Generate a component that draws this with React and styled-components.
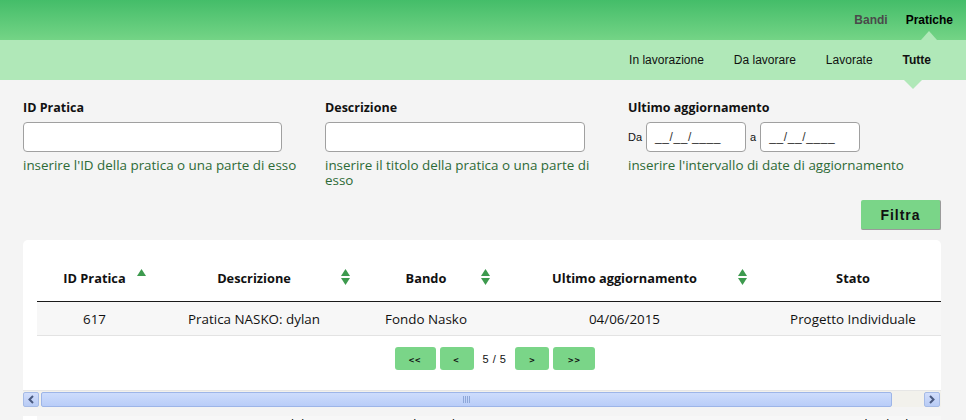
import React from "react";
import styled, { createGlobalStyle } from "styled-components";

const Global = createGlobalStyle`
  html, body { margin: 0; padding: 0; background: #f4f4f4; }
  body { font-family: "Open Sans", "Liberation Sans", sans-serif; color: #111; overflow: hidden; }
  * { box-sizing: border-box; }
`;

const Page = styled.div`
  width: 966px;
  height: 420px;
  overflow: hidden;
  background: #f4f4f4;
`;

const Header = styled.header`
  height: 40px;
  background: linear-gradient(#44bd69, #74d486);
  display: flex;
  justify-content: flex-end;
  align-items: center;
  padding-right: 13px;
  gap: 18px;
`;

const MainLink = styled.span`
  position: relative;
  font-family: "Liberation Sans", Arial, sans-serif;
  font-size: 12px;
  font-weight: bold;
  color: ${(p) => (p.$active ? "#000" : "#4a4a4a")};
  line-height: 40px;
  ${(p) =>
    p.$active &&
    `
    &::after {
      content: "";
      position: absolute;
      left: 50%;
      bottom: 0;
      margin-left: -8px;
      border-left: 8px solid transparent;
      border-right: 8px solid transparent;
      border-bottom: 9px solid #b0e8b8;
    }
  `}
`;

const SubNav = styled.nav`
  position: relative;
  height: 40px;
  background: #b0e8b8;
  display: flex;
  justify-content: flex-end;
  align-items: center;
  padding-right: 20px;
`;

const SubLink = styled.span`
  position: relative;
  padding: 0 15px;
  font-family: "Liberation Sans", Arial, sans-serif;
  font-size: 12px;
  font-weight: ${(p) => (p.$active ? "bold" : "normal")};
  color: #111;
  line-height: 34px;
  ${(p) =>
    p.$active &&
    `
    &::after {
      content: "";
      position: absolute;
      left: 50%;
      top: 37px;
      margin-left: -13px;
      border-left: 9px solid transparent;
      border-right: 9px solid transparent;
      border-top: 9px solid #b0e8b8;
    }
  `}
`;

const Main = styled.main`
  padding: 20px 25px 0 23px;
`;

const Filters = styled.div`
  display: grid;
  grid-template-columns: 302px 303px 1fr;
`;

const Field = styled.div`
  display: flex;
  flex-direction: column;
`;

const Label = styled.div`
  font-size: 12.5px;
  font-weight: bold;
  line-height: 16px;
  margin-bottom: 6px;
  color: #111;
`;

const TextInput = styled.div`
  width: ${(p) => p.$w}px;
  height: 30px;
  background: #fff;
  border: 1px solid #a0a0a0;
  border-radius: 4px;
  font-family: "Liberation Sans", Arial, sans-serif;
  font-size: 12px;
  letter-spacing: 0.6px;
  color: #333;
  display: flex;
  align-items: center;
  padding-left: 8px;
`;

const DateRow = styled.div`
  display: flex;
  align-items: center;
  gap: 4px;
  font-family: "Liberation Sans", Arial, sans-serif;
  font-size: 11px;
  color: #111;
`;

const Help = styled.div`
  margin-top: 6px;
  font-size: 13.4px;
  line-height: 15px;
  color: #2d6a36;
  width: ${(p) => p.$w || "auto"};
`;

const ButtonRow = styled.div`
  display: flex;
  justify-content: flex-end;
  margin-top: 12px;
`;

const FilterButton = styled.button`
  width: 80px;
  height: 30px;
  background: #7ad588;
  border: none;
  border-right: 1px solid #9a9a9a;
  border-bottom: 1px solid #9a9a9a;
  border-radius: 2px;
  font-family: "Liberation Sans", Arial, sans-serif;
  font-size: 14px;
  font-weight: bold;
  letter-spacing: 1px;
  color: #111;
  padding: 0;
`;

const Card = styled.section`
  margin-top: 10px;
  background: #fff;
  border-radius: 5px 5px 0 0;
  overflow: hidden;
`;

const Scroller = styled.div`
  padding: 14px 0 0 14px;
  width: 930px;
`;

const Table = styled.div`
  width: 916px;
`;

const cols = "115px 204px 140px 257px 200px";

const HeadRow = styled.div`
  display: grid;
  grid-template-columns: ${cols};
  height: 48px;
  border-bottom: 1px solid #1a1a1a;
`;

const HeadCell = styled.div`
  position: relative;
  display: flex;
  align-items: center;
  justify-content: center;
  font-size: 12.8px;
  font-weight: bold;
  color: #111;
`;

const SortIcon = styled.svg`
  position: absolute;
  right: 6px;
  top: 15px;
`;

const DataRow = styled.div`
  display: grid;
  grid-template-columns: ${cols};
  height: 34px;
  background: #f7f7f7;
  border-bottom: 1px solid #e3e3e3;
`;

const DataCell = styled.div`
  display: flex;
  align-items: center;
  justify-content: center;
  font-size: 13.4px;
  color: #111;
`;

const Pager = styled.div`
  display: flex;
  justify-content: center;
  align-items: center;
  gap: 4px;
  margin-top: 11px;
  padding-bottom: 20px;
`;

const PageBtn = styled.span`
  width: ${(p) => p.$w}px;
  height: 23px;
  background: #7ad588;
  border-radius: 3px;
  display: flex;
  align-items: center;
  justify-content: center;
  font-family: "DejaVu Sans Mono", monospace;
  font-size: 9px;
  font-weight: bold;
  letter-spacing: 1px;
  color: #111;
  padding-top: 3px;
`;

const PageInfo = styled.span`
  font-family: "Liberation Sans", Arial, sans-serif;
  font-size: 11px;
  color: #111;
  margin: 0 5px;
  letter-spacing: 0.5px;
`;

const ScrollBar = styled.div`
  display: flex;
  height: 17px;
  background: #f2f1ec;
  border-top: 1px solid #e6e6e6;
  padding: 1px 1px 0 0;
`;

const ScrollBtn = styled.span`
  width: 16px;
  height: 15px;
  background: linear-gradient(#d2defb, #b8cbf5);
  border: 1px solid #a6bbe6;
  border-radius: 2px;
  display: flex;
  align-items: center;
  justify-content: center;
  margin: ${(p) => (p.$right ? "0 0 0 auto" : "0")};
`;

const Thumb = styled.span`
  width: 851px;
  height: 15px;
  margin-left: 2px;
  background: linear-gradient(#cddcfc, #b9cdf8);
  border: 1px solid #9db5e8;
  border-radius: 2px;
  display: flex;
  align-items: center;
  justify-content: center;
`;

const Grip = styled.span`
  width: 7px;
  height: 7px;
  background: repeating-linear-gradient(90deg, #8ea7d8 0 1px, transparent 1px 2px);
`;

const GhostCard = styled.div`
  margin-top: 9px;
  background: #fff;
  padding-left: 14px;
`;

const GhostRow = styled(DataRow)`
  height: 20px;
  & > div { align-items: flex-start; margin-top: -1px; }
`;

const Chevron = ({ right }) => (
  <svg width="6" height="9" viewBox="0 0 6 9">
    <path
      d={right ? "M1 1 L4.5 4.5 L1 8" : "M5 1 L1.5 4.5 L5 8"}
      fill="none"
      stroke="#4a5a80"
      strokeWidth="2"
    />
  </svg>
);

const Sort = ({ up }) => (
  <SortIcon width="9" height="16" viewBox="0 0 9 16">
    <path d="M4.5 0 L9 7 L0 7 Z" fill="#3d9a4e" />
    {!up && <path d="M0 9 L9 9 L4.5 16 Z" fill="#3d9a4e" />}
  </SortIcon>
);

const headers = [
  { t: "ID Pratica", s: "up" },
  { t: "Descrizione", s: "both" },
  { t: "Bando", s: "both" },
  { t: "Ultimo aggiornamento", s: "both" },
  { t: "Stato" },
];

const row = ["617", "Pratica NASKO: dylan", "Fondo Nasko", "04/06/2015", "Progetto Individuale"];

export default function App() {
  return (
    <Page>
      <Global />
      <Header>
        <MainLink>Bandi</MainLink>
        <MainLink $active>Pratiche</MainLink>
      </Header>
      <SubNav>
        <SubLink>In lavorazione</SubLink>
        <SubLink>Da lavorare</SubLink>
        <SubLink>Lavorate</SubLink>
        <SubLink $active>Tutte</SubLink>
      </SubNav>
      <Main>
        <Filters>
          <Field>
            <Label>ID Pratica</Label>
            <TextInput $w={259} />
            <Help>inserire l'ID della pratica o una parte di esso</Help>
          </Field>
          <Field>
            <Label>Descrizione</Label>
            <TextInput $w={260} />
            <Help $w="285px">inserire il titolo della pratica o una parte di esso</Help>
          </Field>
          <Field>
            <Label>Ultimo aggiornamento</Label>
            <DateRow>
              <span>Da</span>
              <TextInput $w={100}>__/__/____</TextInput>
              <span>a</span>
              <TextInput $w={100}>__/__/____</TextInput>
            </DateRow>
            <Help>inserire l'intervallo di date di aggiornamento</Help>
          </Field>
        </Filters>
        <ButtonRow>
          <FilterButton>Filtra</FilterButton>
        </ButtonRow>
        <Card>
          <Scroller>
            <Table>
              <HeadRow>
                {headers.map((h) => (
                  <HeadCell key={h.t}>
                    {h.t}
                    {h.s && <Sort up={h.s === "up"} />}
                  </HeadCell>
                ))}
              </HeadRow>
              <DataRow>
                {row.map((c) => (
                  <DataCell key={c}>{c}</DataCell>
                ))}
              </DataRow>
              <Pager>
                <PageBtn $w={41}>&lt;&lt;</PageBtn>
                <PageBtn $w={34}>&lt;</PageBtn>
                <PageInfo>5 / 5</PageInfo>
                <PageBtn $w={34}>&gt;</PageBtn>
                <PageBtn $w={42}>&gt;&gt;</PageBtn>
              </Pager>
            </Table>
          </Scroller>
          <ScrollBar>
            <ScrollBtn>
              <Chevron />
            </ScrollBtn>
            <Thumb>
              <Grip />
            </Thumb>
            <ScrollBtn $right>
              <Chevron right />
            </ScrollBtn>
          </ScrollBar>
        </Card>
        <GhostCard>
          <GhostRow>
            {row.map((c) => (
              <DataCell key={c}>{c}</DataCell>
            ))}
          </GhostRow>
        </GhostCard>
      </Main>
    </Page>
  );
}
